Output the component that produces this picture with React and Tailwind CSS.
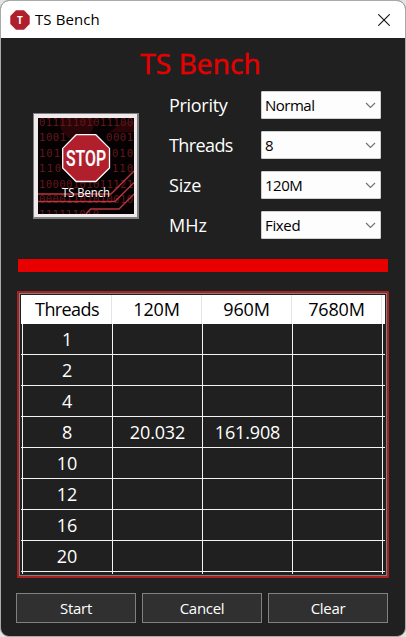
import React from 'react';

const fields = [
  ['Priority', 'Normal', 'tracking-[-0.3px]', 'tracking-[-0.5px]'],
  ['Threads', '8', 'tracking-[-0.6px]', 'tracking-[-0.4px]'],
  ['Size', '120M', 'tracking-[-0.2px]', 'tracking-[-0.5px]'],
  ['MHz', 'Fixed', 'tracking-[0px]', 'tracking-[-0.35px]'],
];

const rows = [
  ['1', '', '', ''],
  ['2', '', '', ''],
  ['4', '', '', ''],
  ['8', '20.032', '161.908', ''],
  ['10', '', '', ''],
  ['12', '', '', ''],
  ['16', '', '', ''],
  ['20', '', '', ''],
];

// Each strip of digits: x, baseline, drawn length, characters.
const binary = [
  [1, 8, 94, '01111101011100'],
  [1, 23.4, 27, '1001'],
  [68, 23.4, 27, '0001'],
  [1, 38.8, 21, '101'],
  [74, 38.8, 21, '010'],
  [1, 54.2, 22, '110'],
  [74, 54.2, 21, '110'],
  [1, 69.6, 94, '10000101011121'],
  [1, 85, 94, '00001101010010'],
  [1, 99.5, 60, '111111010'],
];

function StopPicture() {
  return (
    <svg width="96" height="96" viewBox="0 0 96 96" className="block">
      <rect width="96" height="96" fill="#050103" />
      <circle cx="39" cy="5" r="17" fill="#2a0508" />
      <path d="M72 14L84 4H96V14Z" fill="#2a0508" />
      <g fill="#661719" fontFamily="'DejaVu Sans Mono', monospace" fontSize="10.500">
        {binary.map(([x, y, length, digits]) => (
          <text key={`${x}-${y}`} x={x} y={y} textLength={length}>{digits}</text>
        ))}
      </g>
      <g fill="none" stroke="#b5373b" strokeWidth="1.4">
        <path d="M0 76H73L96 53" />
        <path d="M0 83.500H77L96 64.500" />
        <path d="M48 96L52.500 91H81L96 76" />
      </g>
      <path d="M38.200 16.700H57.800L71.500 30.400V50L57.800 63.500H38.200L24.700 50V30.400Z" fill="#b11f2d" stroke="#fff" strokeWidth="1.300" />
      <text x="28" y="48" textLength="40" lengthAdjust="spacingAndGlyphs" fill="#fff" stroke="#fff" strokeWidth="0.2" fontFamily="'Roboto', sans-serif" fontWeight="500" fontSize="22">STOP</text>
      <text x="24" y="78.500" textLength="48" lengthAdjust="spacingAndGlyphs" fill="#fff" fontFamily="'Open Sans', sans-serif" fontSize="12">TS Bench</text>
    </svg>
  );
}

export default function App() {
  return (
    <div className="h-[637px] w-[406px] overflow-hidden bg-[#e4e4e4] font-['Open_Sans','Noto_Sans',sans-serif]">
      <div className="flex h-[637px] w-[406px] flex-col overflow-hidden rounded-[9px] border border-[#a9a9a9] bg-[#202020]">
        <header className="flex h-[37px] shrink-0 items-center bg-white pl-[9px] pr-[15px]">
          <svg width="20" height="20" viewBox="0 0 20 20">
            <path d="M6 0.300H14L19.700 6V14L14 19.700H6L0.300 14V6Z" fill="#b11f2d" />
            <text x="10" y="13.500" textAnchor="middle" fill="#fff" fontFamily="'Open Sans', sans-serif" fontWeight="700" fontSize="10">T</text>
          </svg>
          <span className="-mt-[2px] ml-[5px] grow text-[15px] leading-[20px] tracking-[0.1px] text-black">TS Bench</span>
          <svg width="12" height="12" viewBox="0 0 12 12" fill="none" stroke="#111" strokeWidth="1.100">
            <path d="M0.300 0.300L11.700 11.700M11.700 0.300L0.300 11.700" />
          </svg>
        </header>

        <h1 className="h-[53px] shrink-0 pr-[5px] pt-[4px] text-center text-[28px] leading-[42px] tracking-[0.1px] text-[#e80000] [-webkit-text-stroke:0.5px_#e80000]">TS Bench</h1>

        <section className="flex h-[168px] shrink-0 pl-[32px]">
          <div className="mt-[22px] h-[106px] w-[106px] shrink-0 border border-b-2 border-r-2 border-[#808080] bg-[#f0eaec] pl-[4px] pt-[4px]">
            <StopPicture />
          </div>
          <div className="ml-[30px] flex flex-col gap-[12px]">
            {fields.map(([label, value, lt, vt]) => (
              <div key={label} className="flex h-[28px] items-center">
                <span className={`w-[92px] text-[18px] leading-[28px] text-white ${lt}`}>{label}</span>
                <div className="flex h-[28px] w-[120px] items-center justify-between rounded-[1px] border border-[#d0d0d0] bg-[#fdfdfd] pl-[3px] pr-[4px]">
                  <span className={`text-[15px] leading-[26px] text-black ${vt}`}>{value}</span>
                  <svg width="11" height="7" viewBox="0 0 11 7" fill="none" stroke="#707070" strokeWidth="1.100">
                    <path d="M1 1L5.500 5.500L10 1" />
                  </svg>
                </div>
              </div>
            ))}
          </div>
        </section>

        <div className="ml-[17px] h-[13px] w-[370px] shrink-0 bg-[#e80000]" />

        <div className="ml-[16px] mt-[19px] h-[287px] w-[372px] shrink-0 border-2 border-[#a82020]">
          <div className="h-[283px] w-[368px] border border-[#808080] pl-[1px] pr-[1px] pt-[1px]">
            <div className="flex h-[29px] w-[364px] bg-white text-[18px] leading-[29px] tracking-[-0.15px] text-black">
              <div className="w-[91px] border-r border-[#e4e4e4] pl-[2px] text-center tracking-[-0.6px]">Threads</div>
              <div className="w-[90px] border-r border-[#e4e4e4] text-center">120M</div>
              <div className="w-[90px] border-r border-[#e4e4e4] text-center">960M</div>
              <div className="w-[89px] text-center">7680M</div>
              <div className="w-[1px] bg-[#e4e4e4]" />
            </div>
            <div className="h-[250px] w-[364px]">
              {rows.map((row) => (
                <div key={row[0]} className="flex h-[31px] w-[364px] border-b border-[#f4f4f4] pl-[1px] text-[18px] leading-[30px] tracking-[-0.15px] text-white">
                  <div className="h-[31px] w-[91px] border-x border-[#f4f4f4] pr-[1px] text-center">{row[0]}</div>
                  {row.slice(1).map((cell, i) => (
                    <div key={i} className="h-[31px] w-[90px] border-r border-[#f4f4f4] text-center">{cell}</div>
                  ))}
                </div>
              ))}
              <div className="flex h-[2px] pl-[1px]">
                <div className="w-[91px] border-x border-[#f4f4f4]" />
                <div className="w-[90px] border-r border-[#f4f4f4]" />
                <div className="w-[90px] border-r border-[#f4f4f4]" />
                <div className="w-[90px] border-r border-[#f4f4f4]" />
              </div>
            </div>
          </div>
        </div>

        <footer className="mt-[15px] flex gap-[6px] pl-[15px]">
          {['Start', 'Cancel', 'Clear'].map((name) => (
            <button key={name} className="h-[30px] w-[120px] border border-[#808080] bg-[#303030] text-[15px] leading-[28px] tracking-[-0.3px] text-white">
              {name}
            </button>
          ))}
        </footer>
      </div>
    </div>
  );
}
